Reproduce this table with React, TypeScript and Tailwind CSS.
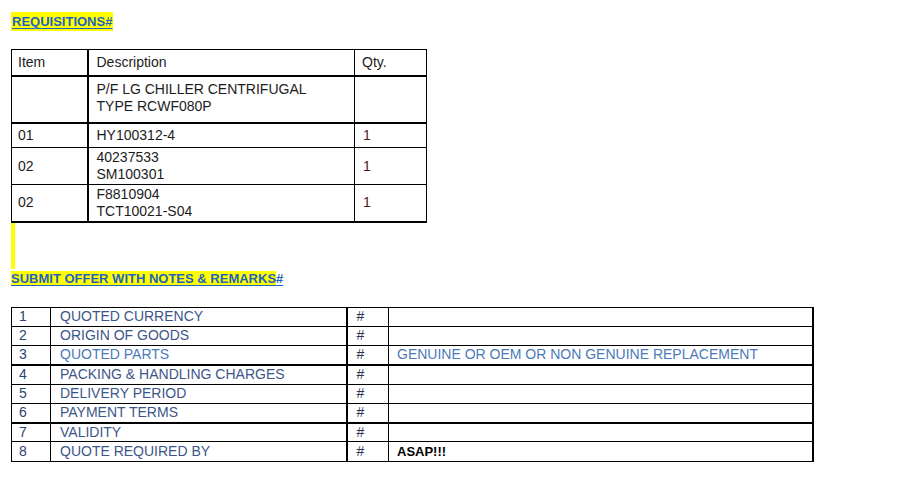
import React from "react";

const font = { fontFamily: '"Liberation Sans", Arial, sans-serif' };

type R1 = { item: string; desc: string[]; qty: string; h: string; top?: string; thick?: boolean };

const rows1: R1[] = [
  { item: "", desc: ["P/F LG CHILLER CENTRIFUGAL", "TYPE RCWF080P"], qty: "", h: "h-[47px]" },
  { item: "01", desc: ["HY100312-4"], qty: "1", h: "h-[25px]", thick: true },
  { item: "02", desc: ["40237533", "SM100301"], qty: "1", h: "h-[37px]" },
  { item: "02", desc: ["F8810904", "TCT10021-S04"], qty: "1", h: "h-[37px]" },
];

const rows2 = [
  { n: "1", label: "QUOTED CURRENCY", val: "" },
  { n: "2", label: "ORIGIN OF GOODS", val: "" },
  { n: "3", label: "QUOTED PARTS", val: "GENUINE OR OEM OR NON GENUINE REPLACEMENT", light: true },
  { n: "4", label: "PACKING & HANDLING CHARGES", val: "", thickTop: true },
  { n: "5", label: "DELIVERY PERIOD", val: "" },
  { n: "6", label: "PAYMENT TERMS", val: "" },
  { n: "7", label: "VALIDITY", val: "", thickTop: true },
  { n: "8", label: "QUOTE REQUIRED BY", val: "ASAP!!!", bold: true },
];

export default function App() {
  return (
    <div className="w-[902px] h-[480px] bg-white overflow-hidden pl-[11px] pt-[12px]" style={font}>
      <div className="flex">
        <span className="bg-[#ffff00] text-[#1f63c0] font-bold underline text-[13px] leading-[19px] px-[1px] underline-offset-2">
          REQUISITIONS#
        </span>
      </div>

      <table className="mt-[18px] border-collapse text-[14px] text-[#1c1c1c]">
        <tbody>
          <tr className="h-[26px]">
            <td className="w-[76px] border border-black border-b-2 pl-[6px] align-middle">Item</td>
            <td className="w-[267px] border border-black border-l-2 border-b-2 pl-[8px]">Description</td>
            <td className="w-[72px] border border-black border-b-2 pl-[7px]">Qty.</td>
          </tr>
          {rows1.map((r, i) => (
            <tr key={i} className={r.h}>
              <td className={`border border-black pl-[6px] leading-[17px] ${r.thick ? "border-t-2" : ""} ${i === rows1.length - 1 ? "border-b-2" : ""}`}>
                {r.item}
              </td>
              <td
                className={`border border-black border-l-2 pl-[8px] leading-[17px] ${i === 0 ? "align-top pt-[4px]" : ""} ${r.thick ? "border-t-2" : ""} ${i === rows1.length - 1 ? "border-b-2" : ""}`}
              >
                {r.desc.map((d) => (
                  <div key={d}>{d}</div>
                ))}
              </td>
              <td className={`border border-black pl-[8px] text-[#4a1c1c] leading-[17px] ${r.thick ? "border-t-2" : ""} ${i === rows1.length - 1 ? "border-b-2" : ""}`}>
                {r.qty}
              </td>
            </tr>
          ))}
        </tbody>
      </table>

      <div className="flex h-[46px]">
        <div className="w-[4px] bg-[#ffff00]" />
      </div>

      <div className="flex">
        <span className="font-bold underline text-[13px] leading-[20px] text-[#1f63c0] underline-offset-2">
          <span className="bg-[#ffff00]">SUBMIT OFFER WITH NOTES &amp; REMARKS</span>#
        </span>
      </div>

      <table className="mt-[18px] border-collapse text-[14px]">
        <tbody>
          {rows2.map((r) => (
            <tr key={r.n} className="h-[19.25px]">
              <td className={`w-[39px] border border-black pl-[7px] leading-[17px] text-[#2d4270] ${r.thickTop ? "border-t-2" : ""}`}>
                {r.n}
              </td>
              <td
                className={`w-[296px] border border-black pl-[9px] leading-[17px] ${r.light ? "text-[#4a7ab8]" : "text-[#3d5689]"} ${r.thickTop ? "border-t-2" : ""}`}
              >
                {r.label}
              </td>
              <td className={`w-[42px] border border-black border-l-2 pl-[9px] leading-[17px] text-[#2b3550] ${r.thickTop ? "border-t-2" : ""}`}>
                #
              </td>
              <td
                className={`w-[424px] border border-black border-r-2 pl-[8px] leading-[17px] ${r.bold ? "font-bold text-black text-[13px]" : "text-[#4a7ab8]"} ${r.thickTop ? "border-t-2" : ""}`}
              >
                {r.val}
              </td>
            </tr>
          ))}
        </tbody>
      </table>
    </div>
  );
}
